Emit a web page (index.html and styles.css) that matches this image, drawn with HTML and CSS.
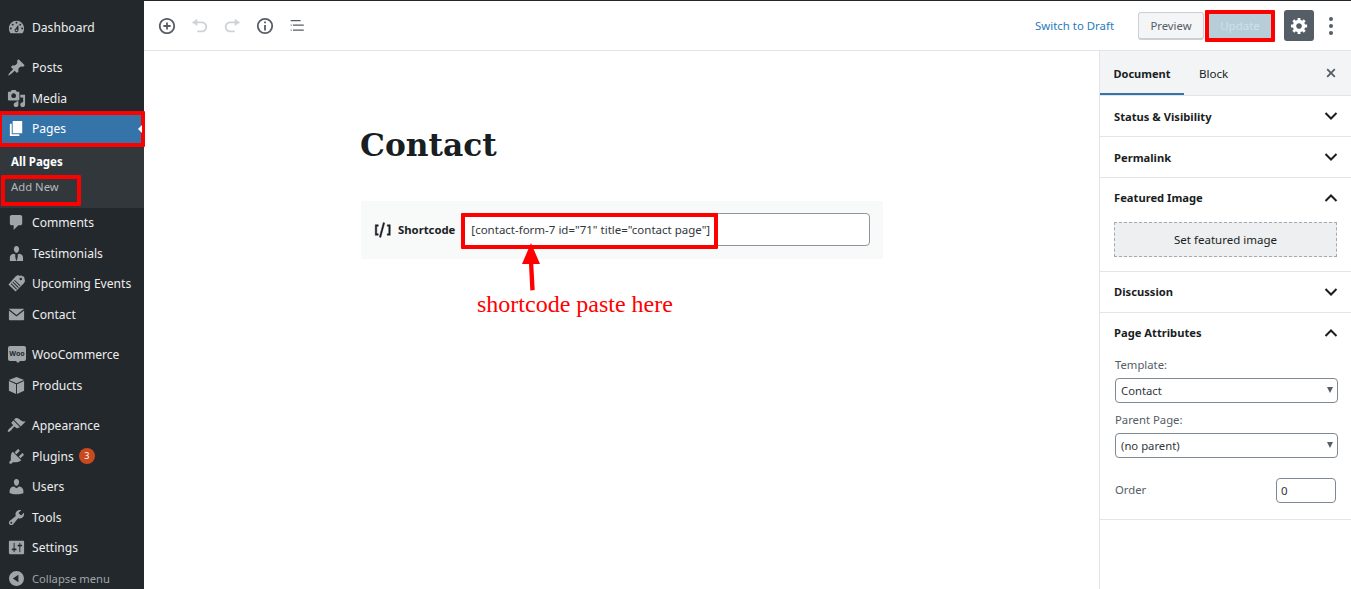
FILE: index.html
```html
<!DOCTYPE html>
<html lang="en">
<head>
    <meta charset="UTF-8">
    <meta name="viewport" content="width=device-width, initial-scale=1.0">
    <title>Edit Page</title>
    <link rel="stylesheet" href="styles.css">
</head>
<body>
    <!-- Admin menu -->
    <nav class="admin-menu">
        <ul class="menu-group">
            <li class="menu-item"><svg class="menu-icon" viewBox="0 0 20 20"><path d="M3.76 16h12.48c1.1-1.37 1.76-3.11 1.76-5 0-4.42-3.58-8-8-8s-8 3.58-8 8c0 1.89.66 3.63 1.76 5zM10 4c.55 0 1 .45 1 1s-.45 1-1 1-1-.45-1-1 .45-1 1-1zM6 6c.55 0 1 .45 1 1s-.45 1-1 1-1-.45-1-1 .45-1 1-1zm8 0c.55 0 1 .45 1 1s-.45 1-1 1-1-.45-1-1 .45-1 1-1zm-5.37 5.55L12 7v6c0 1.1-.9 2-2 2s-2-.9-2-2c0-.57.24-1.08.63-1.45zM4 10c.55 0 1 .45 1 1s-.45 1-1 1-1-.45-1-1 .45-1 1-1zm12 0c.55 0 1 .45 1 1s-.45 1-1 1-1-.45-1-1 .45-1 1-1zm-5 3c0-.55-.45-1-1-1s-1 .45-1 1 .45 1 1 1 1-.45 1-1z"/></svg>Dashboard</li>
        </ul>
        <ul class="menu-group">
            <li class="menu-item"><svg class="menu-icon" viewBox="0 0 20 20"><path d="M10.44 3.02l1.82-1.82 6.36 6.35-1.83 1.82c-1.05-.68-2.48-.57-3.41.36l-.75.75c-.92.93-1.04 2.35-.35 3.41l-1.83 1.82-2.41-2.41-2.8 2.79c-.42.42-3.38 2.71-3.8 2.29s1.86-3.39 2.28-3.81l2.79-2.79L4.1 9.36l1.83-1.82c1.05.69 2.48.57 3.4-.36l.75-.75c.93-.92 1.05-2.35.36-3.41z"/></svg>Posts</li>
            <li class="menu-item"><svg class="menu-icon" viewBox="0 0 20 20"><path d="M13 11V4c0-.55-.45-1-1-1h-1.67L9 1H5L3.67 3H2c-.55 0-1 .45-1 1v7c0 .55.45 1 1 1h10c.55 0 1-.45 1-1zM7 4.5c1.38 0 2.5 1.12 2.5 2.5S8.38 9.5 7 9.5 4.5 8.38 4.5 7 5.62 4.5 7 4.5zM14 6h5v10.5c0 1.38-1.12 2.5-2.5 2.5S14 17.88 14 16.5s1.12-2.5 2.5-2.5c.17 0 .34.02.5.05V9h-3V6zm-4 8.05V13h2v3.5c0 1.38-1.12 2.5-2.5 2.5S7 17.88 7 16.5 8.12 14 9.5 14c.17 0 .34.02.5.05z"/></svg>Media</li>
            <li class="menu-item current"><svg class="menu-icon" viewBox="0 0 20 20"><path d="M6 15V2h10v13H6zm-1 1h8v2H3V5h2v11z"/></svg>Pages<span class="mark mark-pages"></span></li>
            <li class="submenu">
                <div class="submenu-item active">All Pages</div>
                <div class="submenu-item">Add New<span class="mark mark-add"></span></div>
            </li>
            <li class="menu-item"><svg class="menu-icon" viewBox="0 0 20 20"><path d="M5 2h9c1.1 0 2 .9 2 2v7c0 1.1-.9 2-2 2h-2l-5 5v-5H5c-1.1 0-2-.9-2-2V4c0-1.1.9-2 2-2z"/></svg>Comments</li>
            <li class="menu-item"><svg class="menu-icon" viewBox="0 0 20 20"><path d="M10 9.25c-2.27 0-2.73-3.44-2.73-3.44C7 4.02 7.82 2 9.97 2c2.16 0 2.98 2.02 2.71 3.81 0 0-.41 3.44-2.68 3.44zM7 10.2l2.1 1.1-.6 1 1 5h1l1-5-.6-1 2.1-1.1c2.2 0 3.9 2 3.9 4.3V18H3v-3.5c0-2.3 1.7-4.3 4-4.3z"/></svg>Testimonials</li>
            <li class="menu-item"><svg class="menu-icon" viewBox="0 0 20 20"><path d="M9 2.5 11.5 1l2 1 1.2-.6 1 .8L18 3l1 4.5-1.5 2.5L9 18.5 1.5 11zM14.5 4a1.3 1.3 0 1 0 0 2.6 1.3 1.3 0 0 0 0-2.6zM8.2 6.2 7.5 6.9l6 6 .7-.7zM6.4 8l-.7.7 6 6 .7-.7zM4.6 9.8l-.7.7 6 6 .7-.7z" fill-rule="evenodd"/></svg>Upcoming Events</li>
            <li class="menu-item"><svg class="menu-icon" viewBox="0 0 20 20"><path d="M2.5 4h15c.2 0 .3.1.4.2L10 10.6 2.1 4.2c.1-.1.2-.2.4-.2zM2 5.7l8 6.5 8-6.5V15c0 .6-.4 1-1 1H3c-.6 0-1-.4-1-1z"/></svg>Contact</li>
        </ul>
        <ul class="menu-group">
            <li class="menu-item"><span class="woo-icon">Woo</span>WooCommerce</li>
            <li class="menu-item"><svg class="menu-icon" viewBox="0 0 20 20"><path d="M10 1l8 3.200L10 7.500 2 4.200zM9.500 8.600V19L2 15.500V5.300zM10.500 8.600 18 5.300v10.200L10.500 19z"/></svg>Products</li>
        </ul>
        <ul class="menu-group">
            <li class="menu-item"><svg class="menu-icon" viewBox="0 0 20 20"><path d="M14.48 11.06L7.41 3.99l1.5-1.5c.5-.56 2.3-.47 3.51.32 1.21.8 1.43 1.28 2.91 2.1 1.18.64 2.45 1.26 4.45.85zm-.71.71L6.7 4.7 4.93 6.47c-.39.39-.39 1.02 0 1.41l1.06 1.06c.39.39.39 1.03 0 1.42-.6.6-1.43 1.11-2.21 1.69-.35.26-.7.53-1.01.84-1.43 1.43-2.4 3.2-1.88 3.72s2.3-.45 3.73-1.88c.31-.31.58-.66.84-1.01.58-.78 1.09-1.61 1.69-2.21.39-.39 1.03-.39 1.42 0l1.06 1.06c.39.39 1.02.39 1.41 0z"/></svg>Appearance</li>
            <li class="menu-item"><svg class="menu-icon" viewBox="0 0 20 20"><path d="M13.11 4.36L9.87 7.6 8 5.73l3.24-3.24c.35-.34 1.05-.2 1.56.32.52.51.66 1.21.31 1.55zm-8 1.77l.91-1.12 9.01 9.01-1.19.84c-.71.71-2.63 1.16-3.82 1.16H6.14L4.9 17.26c-.59.59-1.54.59-2.12 0-.59-.58-.59-1.53 0-2.12l1.24-1.24v-3.88c0-1.13.4-3.19 1.09-3.89zm7.26 3.97l3.24-3.24c.34-.35 1.04-.21 1.55.31.52.51.66 1.21.31 1.55l-3.24 3.25z"/></svg>Plugins<span class="badge">3</span></li>
            <li class="menu-item"><svg class="menu-icon" viewBox="0 0 20 20"><path d="M10 9.25c-2.27 0-2.73-3.44-2.73-3.44C7 4.02 7.82 2 9.97 2c2.16 0 2.98 2.02 2.71 3.81 0 0-.41 3.44-2.68 3.44zm0 2.57L12.72 10c2.39 0 4.52 2.33 4.52 4.53v2.49s-3.65 1.13-7.24 1.13c-3.65 0-7.24-1.13-7.24-1.13v-2.49c0-2.25 1.94-4.48 4.47-4.48z"/></svg>Users</li>
            <li class="menu-item"><svg class="menu-icon" viewBox="0 0 20 20"><path d="M16.68 9.77c-1.34 1.34-3.3 1.67-4.95.99l-5.41 6.52c-.99.99-2.59.99-3.58 0s-.99-2.59 0-3.57l6.52-5.42c-.68-1.65-.35-3.61.99-4.95 1.28-1.28 3.12-1.62 4.72-1.06l-2.89 2.89 2.82 2.82 2.86-2.87c.53 1.58.18 3.39-1.08 4.65zM3.81 16.21c.4.39 1.04.39 1.43 0 .4-.4.4-1.04 0-1.43-.39-.4-1.03-.4-1.43 0-.39.39-.39 1.03 0 1.43z"/></svg>Tools</li>
            <li class="menu-item"><svg class="menu-icon" viewBox="0 0 20 20"><path d="M18 16V4c0-.55-.45-1-1-1H3c-.55 0-1 .45-1 1v12c0 .55.45 1 1 1h14c.55 0 1-.45 1-1zM8 11h1c.55 0 1 .45 1 1s-.45 1-1 1H8v1.5c0 .28-.22.5-.5.5s-.5-.22-.5-.5V13H6c-.55 0-1-.45-1-1s.45-1 1-1h1V5.5c0-.28.22-.5.5-.5s.5.22.5.5V11zm5-2h-1c-.55 0-1-.45-1-1s.45-1 1-1h1V5.5c0-.28.22-.5.5-.5s.5.22.5.5V7h1c.55 0 1 .45 1 1s-.45 1-1 1h-1v5.5c0 .28-.22.5-.5.5s-.5-.22-.5-.5V9z"/></svg>Settings</li>
            <li class="menu-item collapse"><svg class="menu-icon" viewBox="0 0 20 20"><path d="M10 2.16c4.33 0 7.84 3.51 7.84 7.84s-3.51 7.84-7.84 7.84S2.16 14.33 2.16 10 5.71 2.16 10 2.16zm2 11.72V6.12L6.18 9.97z"/></svg>Collapse menu</li>
        </ul>
    </nav>

    <div class="editor">
        <!-- Top toolbar -->
        <header class="toolbar">
            <div class="tools">
                <svg class="tool" viewBox="0 0 20 20"><path d="M10 1c-5 0-9 4-9 9s4 9 9 9 9-4 9-9-4-9-9-9zm0 16c-3.9 0-7-3.1-7-7s3.1-7 7-7 7 3.1 7 7-3.1 7-7 7zm1-11H9v3H6v2h3v3h2v-3h3V9h-3V6z"/></svg>
                <svg class="tool off" viewBox="0 0 20 20"><path d="M12 5H7V2L1 6l6 4V7h5c2.2 0 4 1.8 4 4s-1.8 4-4 4H7v2h5c3.3 0 6-2.7 6-6s-2.7-6-6-6z"/></svg>
                <svg class="tool off" viewBox="0 0 20 20"><path d="M8 5h5V2l6 4-6 4V7H8c-2.2 0-4 1.8-4 4s1.8 4 4 4h5v2H8c-3.3 0-6-2.7-6-6s2.7-6 6-6z"/></svg>
                <svg class="tool" viewBox="0 0 20 20"><path d="M10 1a9 9 0 1 0 0 18 9 9 0 0 0 0-18zm0 16a7 7 0 1 1 0-14 7 7 0 0 1 0 14zM9 9h2v6H9zm0-4h2v2H9z"/></svg>
                <svg class="tool" viewBox="0 0 20 20"><path d="M3 3.300h11v1.400H3zM3 8.300h1v1.400H3zM5.500 8.300h12v1.400h-12zM3 13.800h1v1.400H3zM5.500 13.800h12v1.400h-12z"/></svg>
            </div>
            <div class="actions">
                <a class="draft-link">Switch to Draft</a>
                <button class="btn-preview">Preview</button>
                <button class="btn-update">Update<span class="mark mark-update"></span></button>
                <span class="btn-settings"><svg viewBox="0 0 20 20"><path d="M18 12h-2.18c-.17.7-.44 1.35-.81 1.93l1.54 1.54-2.1 2.1-1.54-1.54c-.58.36-1.23.63-1.91.79V19H8v-2.18c-.68-.16-1.33-.43-1.91-.79l-1.54 1.54-2.12-2.12 1.54-1.54c-.36-.58-.63-1.23-.79-1.91H1V9.03h2.17c.16-.7.44-1.35.8-1.94L2.43 5.55l2.1-2.1 1.54 1.54c.58-.37 1.24-.64 1.93-.81V2h3v2.18c.68.16 1.33.43 1.91.79l1.54-1.54 2.12 2.12-1.54 1.54c.36.59.64 1.24.8 1.94H18V12zm-8.5 1.5c1.66 0 3-1.34 3-3s-1.34-3-3-3-3 1.34-3 3 1.34 3 3 3z"/></svg></span>
                <span class="more"><i></i><i></i><i></i></span>
            </div>
        </header>

        <div class="workspace">
            <main class="content">
                <div class="column">
                    <h1>Contact</h1>
                    <div class="shortcode-block">
                        <svg class="shortcode-icon" viewBox="0 0 24 24"><path d="M8.5 21.4l1.9.5 5.2-19.3-1.9-.5-5.2 19.3zM3 19h4v-2H5V7h2V5H3v14zm16-14v2h2v10h-2v2h4V5h-4z"/></svg>
                        <label class="shortcode-label">Shortcode</label>
                        <input class="shortcode-input" type="text" value='[contact-form-7 id="71" title="contact page"]'>
                        <span class="mark mark-shortcode"></span>
                        <svg class="arrow" width="24" height="50" viewBox="0 0 24 50"><path d="M11 0l9 21h-6.700l1.400 26-4.400 .4-1.300-26.400H2z"/></svg>
                        <p class="note">shortcode paste here</p>
                    </div>
                </div>
            </main>

            <!-- Settings sidebar -->
            <aside class="sidebar">
                <div class="tabs">
                    <span class="tab active">Document</span>
                    <span class="tab">Block</span>
                    <svg class="close" viewBox="0 0 20 20"><path d="M14.95 6.46L11.41 10l3.54 3.54-1.41 1.41L10 11.42l-3.530 3.530-1.420-1.420L8.580 10 5.050 6.470l1.420-1.420L10 8.580l3.540-3.530z"/></svg>
                </div>
                <section class="panel">
                    <h2>Status &amp; Visibility<svg class="chevron" viewBox="0 0 14 8"><path d="M1.500 1 7 6.500 12.500 1"/></svg></h2>
                </section>
                <section class="panel">
                    <h2>Permalink<svg class="chevron" viewBox="0 0 14 8"><path d="M1.500 1 7 6.500 12.500 1"/></svg></h2>
                </section>
                <section class="panel">
                    <h2>Featured Image<svg class="chevron" viewBox="0 0 14 8"><path d="M1.500 7 7 1.500 12.500 7"/></svg></h2>
                    <div class="panel-body">
                        <button class="set-image">Set featured image</button>
                    </div>
                </section>
                <section class="panel">
                    <h2>Discussion<svg class="chevron" viewBox="0 0 14 8"><path d="M1.500 1 7 6.500 12.500 1"/></svg></h2>
                </section>
                <section class="panel">
                    <h2>Page Attributes<svg class="chevron" viewBox="0 0 14 8"><path d="M1.500 7 7 1.500 12.500 7"/></svg></h2>
                    <div class="panel-body attributes">
                        <label class="field-label">Template:</label>
                        <div class="select-box">Contact</div>
                        <label class="field-label">Parent Page:</label>
                        <div class="select-box">(no parent)</div>
                        <div class="order-row">
                            <label class="field-label">Order</label>
                            <input class="order-input" type="text" value="0">
                        </div>
                    </div>
                </section>
            </aside>
        </div>
    </div>
</body>
</html>
```

FILE: styles.css
```css
/* General Styles */
html, body {
    height: 100%;
}

body {
    margin: 0;
    display: flex;
    height: 589px;
    overflow: hidden;
    font-family: "Noto Sans", sans-serif;
    font-size: 13px;
    color: #191e23;
    background-color: #fff;
}

button, input {
    font-family: inherit;
}

/* Red annotation frames */
.mark {
    position: absolute;
    border: 4px solid #f00;
    border-radius: 1px;
    pointer-events: none;
}

.mark-pages {
    inset: -3px -1px -3px -2px;
}

.mark-add {
    left: 1px;
    top: -1px;
    width: 80px;
    height: 31px;
    box-sizing: border-box;
}

.mark-update {
    inset: -3px -3px -3px -3px;
}

.mark-shortcode {
    left: 100px;
    top: 12px;
    width: 257px;
    height: 36px;
    box-sizing: border-box;
}

/* Admin menu */
.admin-menu {
    flex: 0 0 144px;
    background-color: #23282d;
    padding-top: 12px;
    box-sizing: border-box;
}

.menu-group {
    list-style: none;
    margin: 0 0 10px;
    padding: 0;
}

.menu-item {
    position: relative;
    display: flex;
    align-items: center;
    height: 30.5px;
    padding-left: 7px;
    color: #eee;
    font-size: 12.1px;
    box-sizing: border-box;
}

.menu-icon {
    width: 19px;
    height: 19px;
    margin-right: 6px;
    fill: #a0a5aa;
    flex-shrink: 0;
}

.menu-item.current {
    background-color: #3574a9;
    color: #fff;
}

.menu-item.current .menu-icon {
    fill: #fff;
}

.menu-item.current::after {
    content: "";
    position: absolute;
    right: 2px;
    top: 50%;
    margin-top: -4px;
    border: 4px solid transparent;
    border-left-width: 0;
    border-right-color: #fff;
}

.menu-item.collapse {
    color: #a0a5aa;
    font-size: 11.2px;
}

.submenu {
    background-color: #32373c;
    padding: 7px 0 6px;
    height: 63.5px;
    box-sizing: border-box;
}

.submenu-item {
    position: relative;
    height: 25px;
    line-height: 21px;
    padding-left: 11px;
    color: #b4b9be;
    font-size: 11.3px;
}

.submenu-item.active {
    color: #fff;
    font-weight: 700;
    font-size: 11.5px;
}

.woo-icon {
    position: relative;
    flex-shrink: 0;
    width: 18px;
    height: 15px;
    margin: -2px 6px 0 1px;
    border-radius: 2px;
    background-color: #a0a5aa;
    color: #23282d;
    font-size: 7px;
    font-weight: 700;
    line-height: 15px;
    text-align: center;
}

.woo-icon::after {
    content: "";
    position: absolute;
    left: 8px;
    bottom: -2px;
    border-left: 2px solid transparent;
    border-right: 2px solid transparent;
    border-top: 2px solid #a0a5aa;
}

.badge {
    width: 16px;
    height: 16px;
    margin-left: 5px;
    border-radius: 50%;
    background-color: #ca4a1f;
    color: #fff;
    font-size: 9px;
    line-height: 16px;
    text-align: center;
}

/* Editor */
.editor {
    flex: 1;
    display: flex;
    flex-direction: column;
    min-width: 0;
}

.toolbar {
    display: flex;
    justify-content: space-between;
    align-items: center;
    height: 51px;
    box-sizing: border-box;
    border-top: 1px solid #23282d;
    border-bottom: 1px solid #e2e4e7;
    padding: 0 18px 0 14px;
}

.tools {
    display: flex;
    gap: 14.5px;
    align-items: center;
}

.tool {
    width: 18px;
    height: 18px;
    fill: #555d66;
}

.tool.off {
    fill: #d0d3d6;
}

.actions {
    display: flex;
    align-items: center;
}

.draft-link {
    color: #2a7ab8;
    font-size: 11.4px;
    margin-right: 24px;
}

.btn-preview {
    width: 66px;
    height: 28px;
    padding: 0;
    border: 1px solid #ccd0d4;
    border-bottom-width: 2px;
    border-radius: 3px;
    background-color: #f3f5f6;
    color: #555d66;
    font-size: 11.3px;
}

.btn-update {
    position: relative;
    width: 64px;
    height: 26px;
    margin-left: 4px;
    padding: 0;
    border: none;
    background-color: #b7ced9;
    color: #cfe0e8;
    font-size: 11.5px;
}

.btn-settings {
    display: flex;
    align-items: center;
    justify-content: center;
    width: 30px;
    height: 31px;
    margin-left: 12px;
    border-radius: 3px;
    background-color: #555d66;
}

.btn-settings svg {
    width: 19px;
    height: 19px;
    fill: #fff;
}

.more {
    display: flex;
    flex-direction: column;
    gap: 3px;
    margin-left: 15px;
}

.more i {
    display: block;
    width: 4px;
    height: 4px;
    border-radius: 50%;
    background-color: #555d66;
}

.workspace {
    flex: 1;
    display: flex;
    min-height: 0;
}

.content {
    flex: 1;
    padding-left: 1px;
}

.column {
    width: 522px;
    margin: 0 auto;
}

h1 {
    margin: 0 0 0 -1px;
    padding-top: 73px;
    height: 77px;
    font-family: "DejaVu Serif", serif;
    font-size: 31.3px;
    font-weight: 700;
    line-height: 42px;
    color: #191e23;
}

.shortcode-block {
    position: relative;
    display: flex;
    align-items: center;
    height: 58px;
    padding: 0 13px 0 12px;
    box-sizing: border-box;
    background-color: #f8f9f9;
}

.shortcode-icon {
    width: 18px;
    height: 18px;
    margin-right: 7px;
    fill: #191e23;
    stroke: #191e23;
    stroke-width: .6;
    flex-shrink: 0;
}

.shortcode-label {
    margin: -1px 6px 0 0;
    font-size: 11.3px;
    font-weight: 700;
    white-space: nowrap;
}

.shortcode-input {
    flex: 1;
    min-width: 0;
    height: 33px;
    box-sizing: border-box;
    margin-top: -1px;
    padding: 0 9px;
    border: 1px solid #8d96a0;
    border-radius: 4px;
    background-color: #fff;
    color: #32373c;
    font-size: 11.5px;
}

.arrow {
    position: absolute;
    left: 159px;
    top: 42px;
    fill: #f00;
}

.note {
    position: absolute;
    left: 116px;
    top: 89px;
    margin: 0;
    font-family: "Liberation Serif", serif;
    font-size: 24px;
    line-height: 28px;
    color: #f00;
    white-space: nowrap;
}

/* Settings sidebar */
.sidebar {
    flex: 0 0 252px;
    box-sizing: border-box;
    border-left: 1px solid #e2e4e7;
}

.tabs {
    display: flex;
    align-items: center;
    height: 45px;
    box-sizing: border-box;
    background-color: #f3f4f5;
    border-bottom: 1px solid #e2e4e7;
}

.tab {
    display: flex;
    align-items: center;
    justify-content: center;
    height: 44px;
    box-sizing: border-box;
    padding: 3px 15px 0;
    font-size: 11.6px;
    color: #191e23;
    border-bottom: 2px solid transparent;
}

.tab.active {
    width: 84px;
    padding: 3px 0 0;
    font-size: 11px;
    font-weight: 700;
    border-bottom-color: #3574a9;
}

.close {
    width: 18px;
    height: 18px;
    margin-left: auto;
    margin-right: 11px;
    fill: #555d66;
}

.panel {
    border-bottom: 1px solid #e2e4e7;
}

.panel h2 {
    display: flex;
    justify-content: space-between;
    align-items: center;
    height: 40px;
    box-sizing: border-box;
    margin: 0;
    padding: 0 13px 1px 14px;
    font-size: 11.2px;
    font-weight: 700;
    color: #191e23;
}

/* first two rows sit a pixel lower in the original */
.panel:nth-child(-n+3) h2 {
    padding-bottom: 0;
}

.chevron {
    width: 14px;
    height: 8px;
    fill: none;
    stroke: #191e23;
    stroke-width: 2;
}

.panel-body {
    padding: 4px 14px 14px;
}

.set-image {
    display: block;
    width: 100%;
    height: 35px;
    padding: 0;
    border: 1px dashed #a2aab2;
    background-color: #edeff0;
    color: #191e23;
    font-size: 11.5px;
}

.attributes {
    padding: 4px 13px 16px 15px;
}

.field-label {
    display: block;
    color: #555d66;
    font-size: 11.3px;
    line-height: 16px;
    margin-bottom: 5px;
}

.select-box {
    position: relative;
    height: 25px;
    margin-bottom: 9px;
    box-sizing: border-box;
    padding-left: 5px;
    border: 1px solid #7e8993;
    border-radius: 4px;
    color: #32373c;
    font-size: 11.3px;
    line-height: 24px;
}

.select-box::after {
    content: "";
    position: absolute;
    right: 4px;
    top: 8px;
    border-left: 3px solid transparent;
    border-right: 3px solid transparent;
    border-top: 6px solid #555d66;
}

.order-row {
    display: flex;
    justify-content: space-between;
    align-items: center;
    margin-top: 20px;
    padding-right: 2px;
}

.order-row .field-label {
    margin: -2px 0 0;
}

.order-input {
    width: 60px;
    height: 25px;
    box-sizing: border-box;
    padding: 0 4px;
    border: 1px solid #7e8993;
    border-radius: 4px;
    color: #32373c;
    font-size: 11.5px;
}
```
